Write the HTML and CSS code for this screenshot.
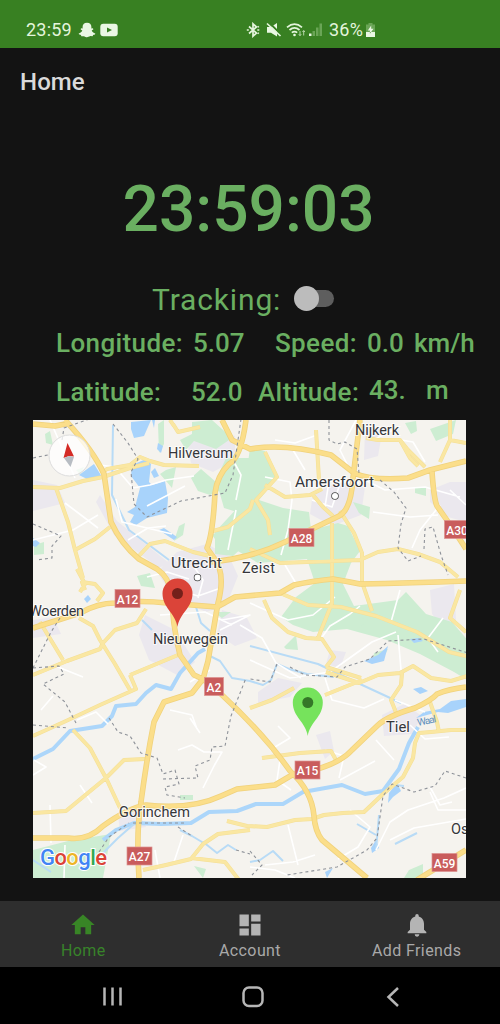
FILE: index.html
```html
<!DOCTYPE html>
<html lang="en">
<head>
<meta charset="utf-8">
<title>Home</title>
<link rel="stylesheet" href="styles.css">
</head>
<body>
<div class="phone">
  <header class="status">
    <div class="status-left">
      <span class="status-time">23:59</span>
      <svg class="snap" width="18" height="16" viewBox="0 0 18 16"><path d="M9 .8c3 0 4.600 2 4.400 4.400v1.200l1.600-.1.300 1.200-1.600 1c.5 1.500 1.800 2.300 3.600 2.900-.1 1.200-1.400 1.300-2.200 1.500l-.5 1.300-2.200-.1C10.800 14.700 10 15.300 9 15.300s-1.800-.6-2.900-1.100l-2.700.1-.5-1.300c-.8-.2-2.100-.3-2.200-1.500 1.800-.6 3.100-1.400 3.600-2.900L2.700 7.500 3 6.300l1.600.1V5.200C4.400 2.800 6 .8 9 .8Z"/></svg>
      <svg class="tube" width="18" height="14" viewBox="0 0 18 14"><rect x=".3" y=".7" width="17.400" height="12.600" rx="3"/><path class="tube-play" d="M7 4.500v5l5-2.500Z"/></svg>
    </div>
    <div class="status-right">
      <svg width="14" height="16" viewBox="0 0 14 16"><path class="line" d="M3 4.500 10.500 11 7 14.200V1.800L10.500 5 3 11.500M.8 8h2M11.300 8h2M11.800 5.200l1-.8M11.800 10.800l1 .8"/></svg>
      <svg class="mute" width="17" height="16" viewBox="0 0 17 16"><path d="M1 5h4l6-4v13.500L5 10.800H1Z"/><path class="slash" d="M3 .5 15.500 13"/><path class="line" d="M1 1.500 14.500 14"/></svg>
      <svg class="wifi" width="20" height="16" viewBox="0 0 20 16"><path class="line" d="M1 5.300q7.500-6.500 15 0M3.500 8q5-4.300 10 0M5.800 10.700q2.700-2.200 5.400 0"/><circle cx="8.500" cy="13" r="1.300"/><path class="thin" d="M14 9v4.500M12.800 12.200l1.200 1.500 1.200-1.500M17.700 13.500V8.700M16.500 10l1.200-1.500L18.900 10"/></svg>
      <svg class="signal" width="15" height="16" viewBox="0 0 15 16"><path d="M1 11.500h2.500V14H1Z"/><path class="faint" d="M4.500 9H7v5H4.500ZM8 5.500h2.500V14H8ZM11.500 1.500H14V14h-2.500Z"/></svg>
      <span class="battery-level">36%</span>
      <svg class="battery" width="11" height="16" viewBox="0 0 11 16"><path class="faint" d="M3.500 1h4v1.500H10V15H1V2.500h2.500Z"/><path d="M1 10h9v5H1ZM6.200 3.500 2.800 8.500h2.100v3.200l3.600-4.900H6.200Z"/></svg>
    </div>
  </header>

  <div class="app-bar">Home</div>

  <main class="content">
    <div class="clock">23:59:03</div>
    <div class="tracking"><span>Tracking:</span><span class="switch"><span class="knob"></span></span></div>
    <div class="stats">
      <span class="label">Longitude:</span><span class="value">5.07</span><span class="label">Speed:</span><span>0.0</span><span>km/h</span>
    </div>
    <div class="stats second">
      <span class="label">Latitude:</span><span class="value">52.0</span><span class="label">Altitude:</span><span class="raised">43.</span><span class="raised unit">m</span>
    </div>

    <svg class="map" viewBox="33 420 433 458" width="433" height="458">
      <rect class="land" x="33" y="420" width="433" height="458"/>
      <g class="urban">
        <path d="M157 572l20-20 30-8 22 12 9 20-12 30-20 6-32-14ZM145 615l30 15 20 32-16 14-30-16-10-25ZM222 610l25 8 10 20-22 8-18-12ZM313 493l25-10 27 4-4 28-29 11-22-12ZM430 490l20-8 16 0v40l-18-5-18-15ZM188 446l22-18 25 8v24l-22 12-22-9ZM33 480l24 5 8 18-32 8ZM258 692l20-14 24 5-12 14-32 6ZM382 715l22-11 18 12-10 18-28 2ZM430 590l24-6 2 36-12 8-12-14ZM33 620l20-3 8 17-28 4ZM365 430l18-2-5 28-14 4ZM118 815l20-4 8 16-26 4ZM330 650l16 2-6 16-14-4ZM100 495l17 26 52 42-10 5-45-33-18-33ZM316 735l14-4 4 20-9 8Z"/>
      </g>
      <g class="park">
        <path d="M250 448l15 3 12 27-18 22 24 8 26 4 2 18 27-7 10 3 12 25-9 12-8 21 11 22 22-3 22-3 8-8 20 22 26 8 24 28 6 16-3 21-25-15-34-18-33-14-40-11-34 3-20-7-12-8 15-20 19-14-8-24-49 4-27-16 10-28 4-34Z"/>
        <path d="M191 478l10-9 23 20-14 6-12-4ZM192 422l20-2 20 18-16 11-22-8-8 9-6-10 12-6ZM226 458h24v58l-26-8-8-28ZM240 505l20-5-3 34-24 22-18-2v-22ZM166 470l10-3-4 21-12-14ZM158 424l6-4v24l-5 9ZM212 535l20-13-4 16-10 5ZM137 576l13-3 5 15-14-2ZM213 612h18l-9 6ZM405 423l11-2 1 10-6 3ZM430 429l26-9-3 14-17 7ZM353 502l17 5-1 12-10-6ZM415 488h11v8l-11-3ZM45 434l5-3 3 14-7-2ZM34 545l10-3v12l-10 1ZM284 647l12-12 2 15-12-1ZM304 605l28 4-16 10-14-1ZM360 617l8 3-11 10ZM374 653l14-4-6 11-9-1ZM33 850l35-9 43-7-8 44H33ZM180 795h13v5h-13ZM194 866l12 3-3 9ZM409 870l14-6v14h-19ZM174 541l5-15 6-3-2 12ZM80 474l-4-4 8-3Z"/>
      </g>
      <g class="water">
        <path d="M131 422l20-2-7 16-10 2-3-9ZM132 465l14-6 5 5-2 18 3 3 13-4 3 17-1 15-20 5-11 7-6-3 4-7-7-3 8-5 5-19-9-12ZM151 472l4-4 4 8-5 2ZM152 420l3 0-1 8ZM158 443l5 3-2 7-4-4ZM79 475l15-11 8 13-13 3ZM159 530l5-2 13 9-3 3ZM33 538l7 5-4 4-3-1ZM84 599l4-4 3 4-4 4ZM364 661l14-6 10-9-4 15-12 3ZM410 639l9-1 4 3-9 2ZM413 689l8-2 7 4-8 3ZM440 709l11-8 15-2v8l-18 6-10-1-22 6 8-6ZM389 793l8-10 4 8-8 6-5 6ZM376 840l3 8-7 5-1-5ZM325 872l8-4-6 10Z"/>
      </g>
      <g class="river">
        <path d="M33 759l20-10 17-18 32-5 10-10 4-10 20-2 10-11 10-8 15 4 9-16 18-20 7-4M103 840l13-10 18-7 27 1 30-1 18-11 28-1 19-7 27 0 20-12 39-7 23 9 18-3 16-22 10-26 9-16"/>
      </g>
      <g class="stream">
        <path d="M210 656l10 5 12 17 18 3M113 425l-1 70 17 35 40 30M196 607l5 16 9 8M142 620l10 10M250 646l68 18 42 20 41 19M250 681l13 4 8-5 6-16 12 5 18 5 27 3M33 860l18 12M99 857l19-19 16-14M180 830l12 6 15 9 10 8 11-8 8 5M250 862l10-2 13-9 10 10M357 824l19 11M395 844l22-11M376 850l3-35M395 785l9 1"/>
      </g>
      <g class="minor">
        <path d="M50 420l25 58M65 503l12 9 21 16M100 465l15 2 18 21 17-3 16-5 28-4M116 499l6 23 50 12M147 506l38-20M236 500l5-25-8-15M236 510l-8 40M265 477l25 5 2 18-4 30-7 25M340 484l-8 23-20-7M325 507l4-26 30 2M350 470l-10-20 16-30M373 440l20-10M365 480l20 10 40-3 35 10M373 512l37 5 28-2M440 505l-20 25-8 18M450 490l16 15M425 462l-12-20-18-3M275 440l20 3 22-8M33 540l40-10 25-15M128 540l20-12 18-2M193 565l10 15-5 18M147 577l20-5 22 7M160 615l45-3 27 13M178 590l20 6 20-7M222 620l28-5-30 15M240 625l22 13 14 25 25 15M250 603l38 17 25-5 22-18M250 660l40 18 40-6 42-30 24-10M320 640l10-14 20-12 10-8M400 590l-9 32M443 618l-15 20 10 14M398 635l3 35M325 678l7 22 32 8 20-9M395 700l30 12M410 725l15 14 24-2M34 760l12 7-13 8M80 785l12 18M50 805l1 38M77 720l19-8 12 12M178 750l14-5 12 7 18 0-8 14M215 764l-12 24M270 750l20-12-12-12M280 760l-3 20 14 10M325 750l19 6-5 22M340 780l35-19M376 740l18 20M350 810l20 17-12 20-20 12M376 850l14-28 18-12 36-12 22-10M390 840l24-12 52-9M430 792l8 18 28 0M430 787l10 18 12-3M288 825l10 40M265 865l28-3 22-7M250 867l25 3 20 8M183 835l-10 30M155 850l5 28M65 845l-1 33M190 718l10 15M53 665l30 12M53 696l-12 14M210 670l-20 12M170 710l22 5 5 14M285 565l12 20M305 470l-12-20"/>
      </g>
      <g class="road casing">
        <path id="sec" d="M33 487l27 1 23-7 20-4 27-9 19-5M56 488l12 34 7 28 8 28M75 550l20-11 15-12M102 473l5-4 23-4 10-8 10 4 14 4 35 1M137 558l13-14 15-3 28 11 17 4M173 424l5 8 22-5M213 531l15-4 22-18 3-9M170 420l4 6M77 569l8 15-5 8M85 590l-3-8 13 2 8 9-6 8M79 618l14 8 7 14 15 24 15 26M40 622l23 38M33 675l34-14 33-12 3-6 12-13 22-7 9-14M130 675l48-20M130 675l6 14-36 16-34 16-22 10-11 5M73 730l17 18 17 32 13 28M33 813l33-2 40-33 18-18 21-1M264 600l8 18 16 14 18 6 16 1 12 18-8 10M326 667l35 11M280 593l28 12 33 2 35 9 41 16 32 20 17 4M265 452l12 25-21 23 12 20 2 15M265 485l20 12 25-2 12-6M316 430l3 50M313 495l10 12 10 9M332 523v80l-14 35M340 511l14 22 8 20v30M363 585l9 26M250 549l30 14 80-3 18-8 20-3 20 5 22 8 18 15M366 438l12 2 22 0 8 10 17 17M400 440l10 18 8 8M450 420l0 20 16 3M450 440l-10 22M460 590l-10 28 16 14M326 672l33 11 19-8 22-2 13-7 18 12 20 3 16-5M325 695l37-15M402 673l-1 12-10 15 6 15M250 708l22-8 22-12M430 702l7 20 2 10M466 730h-15l-20 2-12 1-4 10-2 15-10 19-20 17-19 18-21 1-19 2-12 4-17 1-28 7-20-1-20-5M262 758l38-5 31-2 5 9M143 870l23-5 25-6 12-15 15-10 32-4M191 858l34 4 14 18"/>
      </g>
      <g class="road fill"><use href="#sec"/></g>
      <g class="main casing">
        <path id="pri" d="M65 420q28 30 39 54l7 48q10 22 28 37l18 10q12 8 15 26 0 28 8 60l14 20 9 4 18 15q43 40 69 77 22 20 24 45 1 15 8 24l45 38M246 420q-5 38-17 44-12 12-14 29-2 40-8 55l7 10q12 15 4 45l-10 58-5 18-11 14-28 9-10 20q-7 35-13 80-5 30-2 76M33 628l47-15q18-10 35-10 25-3 52 0l50 4 18-10 45-4 14-8q18-4 39-6 12 2 27 5 50-1 106-3M210 562q42-4 75-20l54-26q12-6 14-38l7-58M222 420l10 20 18 9q34-6 81 6l23 18q18 8 54 5l22-8 36-9M432 472q2 28 5 34l14 20 15 23M33 838h35q20 3 35-12 25-18 43-21 45 5 75-9l16-7 38-4 17-10q45-8 60-25l25-24q10-10 38-18 17-8 22-14 12-5 29-7M417 880l49-30M33 424l22 2 15-3"/>
      </g>
      <g class="main fill"><use href="#pri"/></g>
      <path class="border" d="M113 424l15 19 10 16-7 13 3 32 13 13 34-16 44-8 8-18 8-56M33 458l15-3M62 440l2-12 28-10M33 524l28 12-9 10v12l-16 2M60 618l-9 14-18 36M33 668l26-2 5 8-21 10 22 18 12 23M33 725l35 3M109 718l9 14 12 4 11 17 16 5 6 16 12-4 4 14-14 3 2 8 18 3M163 779l35-1-3-12 15-6 2-13 13-1 6-30 15-38M329 420l0 20 8 4 8-2 12 7 2 24M380 480l14 12 12 16-5 16-3 24 10 13 13-5M424 549l1-20 8-2 8 28 7 20M277 664l-7 18-20-3M290 667l15 8 32 2 8-10 25-8 18-18 36-2 44 14M133 823h52M99 852l10-15 20-14M178 827l14 9M236 850l14 4M466 778l-21-7-10 15-21 6-22-8-9 12-6 42-10 12-30 17-50 8M250 851l12 14-10 10"/>
      <g class="river-name"><text x="418" y="726" textLength="19" transform="rotate(-12 418 726)">Waal</text></g>
      <g class="places">
        <text x="168" y="458" textLength="65">Hilversum</text><text x="355" y="435" textLength="44">Nijkerk</text><text x="295" y="486.500" textLength="79" lengthAdjust="spacingAndGlyphs">Amersfoort</text><text x="171" y="567.500" textLength="51" lengthAdjust="spacingAndGlyphs">Utrecht</text><text x="242" y="573" textLength="33">Zeist</text><text x="29" y="616" textLength="55">Woerden</text><text x="153" y="643.500" textLength="75">Nieuwegein</text><text x="386" y="732" textLength="24" lengthAdjust="spacingAndGlyphs">Tiel</text><text x="119" y="817" textLength="71">Gorinchem</text><text x="451" y="834">Os</text>
        <circle cx="335" cy="496" r="3"/><circle cx="197.500" cy="577.500" r="3"/>
      </g>
      <g class="shields">
        <rect x="289" y="528.500" width="25" height="18"/><rect x="444.500" y="520.500" width="25" height="18"/><rect x="115" y="589.500" width="25" height="18"/><rect x="204.500" y="677.500" width="19" height="18"/><rect x="295" y="761" width="25" height="18"/><rect x="127" y="847" width="25" height="18"/><rect x="432" y="853.500" width="25" height="18"/>
        <text x="301.500" y="542.500">A28</text><text x="457" y="534.500">A30</text><text x="127.500" y="603.500">A12</text><text x="214" y="691.500">A2</text><text x="307.500" y="775">A15</text><text x="139.500" y="861">A27</text><text x="444.500" y="867.500">A59</text>
      </g>
      <g><path fill="#db4439" d="M177.500 627C175.500 613 162.500 608 162.500 593.500a15 15 0 0 1 30 0C192.500 608 179.500 613 177.500 627Z"/><circle cx="177.500" cy="593.500" r="5.500" fill="#74201a"/></g>
      <g><path fill="#76e35c" d="M307.800 736C305.800 722 292.800 717 292.800 702.500a15 15 0 0 1 30 0C322.800 717 309.800 722 307.800 736Z"/><circle cx="307.800" cy="702.500" r="5.500" fill="#357728"/></g>
      <circle class="compass" cx="69.500" cy="455.500" r="20.500"/>
      <path fill="#d42b25" d="M67.500 443l-4 15 5.500-2 5 .5Z"/><path fill="#b8bdc3" d="M64 458l5-2 5 1-3.500 10Z"/>
      <text class="google" x="40" y="864.500" textLength="67"><tspan fill="#4285f4">G</tspan><tspan fill="#db4437">o</tspan><tspan fill="#edb526">o</tspan><tspan fill="#4285f4">g</tspan><tspan fill="#34a853">l</tspan><tspan fill="#db4437">e</tspan></text>
    </svg>
  </main>

  <nav class="tabs">
    <div class="tab active"><svg width="28" height="28" viewBox="0 0 24 24"><path d="M10 20v-6h4v6h5v-8h3L12 3 2 12h3v8Z"/></svg><span>Home</span></div>
    <div class="tab"><svg width="28" height="28" viewBox="0 0 24 24"><path d="M3 13h8V3H3Zm0 8h8v-6H3Zm10 0h8V11h-8Zm0-18v6h8V3Z"/></svg><span>Account</span></div>
    <div class="tab"><svg width="28" height="28" viewBox="0 0 24 24"><path d="M12 22c1.100 0 2-.9 2-2h-4a2 2 0 0 0 2 2Zm6-6v-5c0-3.070-1.640-5.640-4.500-6.320V4a1.500 1.500 0 0 0-3 0v.68C7.630 5.360 6 7.920 6 11v5l-2 2v1h16v-1Z"/></svg><span>Add Friends</span></div>
  </nav>

  <footer class="system">
    <svg width="22" height="22" viewBox="0 0 22 22"><path d="M2.500 1.500v18M10.500 1.500v18M18.500 1.500v18"/></svg>
    <svg width="22" height="22" viewBox="0 0 22 22"><rect x="1.500" y="1.500" width="19" height="18.500" rx="5.500"/></svg>
    <svg width="22" height="22" viewBox="0 0 22 22"><path d="M16 2 6.500 11 16 20"/></svg>
  </footer>
</div>
</body>
</html>
```
FILE: styles.css
```css
* { box-sizing: border-box; }
body { margin: 0; background: #131313; font-family: Roboto, "Liberation Sans", sans-serif; }
svg { display: block; flex: none; }
.phone { width: 500px; height: 1024px; display: flex; flex-direction: column; background: #131313; overflow: hidden; }

.status { height: 48px; flex: none; padding: 12px 124px 0 26px; background: #388022; color: #e4f5dc; display: flex; justify-content: space-between; font-size: 18px; line-height: 36px; }
.status-left, .status-right { display: flex; align-items: center; height: 36px; }
.status-time { letter-spacing: .2px; }
.status svg { fill: #eaf7e4; }
.snap { margin-left: 6px; }
.tube { margin-left: 4px; }
.status .tube-play { fill: #388022; }
.status .line { fill: none; stroke: #e4f5dc; stroke-width: 1.7; }
.slash { stroke: #388022; stroke-width: 2; }
.status .thin { fill: none; stroke: #b6d6a9; stroke-width: 1; }
.status .faint { fill: #6aa556; }
.mute { margin-left: 6px; }
.wifi { margin-left: 3px; }
.signal { margin-left: 2px; }
.battery-level { margin-left: 6px; width: 36px; white-space: nowrap; letter-spacing: .2px; }
.battery { margin-left: 0; }

.app-bar { height: 68px; flex: none; padding-left: 20px; color: #dadada; font-size: 24px; font-weight: 500; line-height: 68px; letter-spacing: .1px; }

.content { flex: 1; min-height: 0; color: #6aaf61; }
.clock { height: 92px; margin-top: 48px; font-size: 64px; font-weight: 500; line-height: 92px; text-align: center; padding-right: 3px; }
.tracking { display: flex; align-items: center; height: 36px; margin-top: 26px; padding-left: 152px; font-size: 30px; line-height: 36px; }
.tracking > span:first-child { width: 142px; letter-spacing: .85px; }
.switch { display: flex; align-items: center; width: 38px; height: 17px; margin: -3px 0 0 2px; border-radius: 9px; background: #5e5e5e; }
.knob { width: 25px; height: 25px; margin-left: -2px; flex: none; border-radius: 50%; background: #bcbcbc; }
.stats { display: grid; grid-template-columns: 137px 82px 92px 47px 70px; padding-left: 56px; height: 36px; margin-top: 7px; font-size: 26px; font-weight: 500; line-height: 36px; white-space: nowrap; }
.stats.second { grid-template-columns: 135px 67px 111px 57px 50px; margin-top: 13px; }
.label { letter-spacing: .38px; }
.raised { line-height: 32px; }
.map { margin: 10px 0 0 33px; }

.land { fill: #f5f3ee; }
.urban { fill: #ebe8ee; }
.park { fill: #cdedd2; }
.water { fill: #a8d3fb; }
.river, .stream, .minor, .road, .main, .border { fill: none; stroke-linejoin: round; }
.river { stroke: #acd6fa; stroke-width: 4; }
.stream { stroke: #b8dbf6; stroke-width: 2; }
.minor { stroke: #fff; stroke-width: 1.6; }
.road.casing { stroke: #f4df97; stroke-width: 4; }
.road.fill { stroke: #fae7a2; stroke-width: 3; }
.main.casing { stroke: #f0d27c; stroke-width: 5.6; }
.main.fill { stroke: #fbde8a; stroke-width: 4; }
.border { stroke: #8e9299; stroke-width: 1.1; stroke-dasharray: 3 3; }
.river-name { font-size: 10px; fill: #5f91bd; }
.places { font-size: 14.5px; fill: #35363a; stroke: #fff; stroke-width: 2px; stroke-opacity: .7; paint-order: stroke; }
.places circle { fill: #fff; stroke: #444; stroke-width: 1.5px; stroke-opacity: 1; }
.shields rect { fill: #c95c5c; stroke: #dc9290; stroke-width: .7; }
.shields text { font-size: 12px; font-weight: 500; fill: #fff; text-anchor: middle; }
.compass { fill: #fff; fill-opacity: .75; stroke: #ddd; stroke-width: 1; }
.google { font-size: 22px; font-weight: 500; stroke: #fff; stroke-width: 2px; paint-order: stroke; }

.tabs { height: 66px; flex: none; display: grid; grid-template-columns: repeat(3, 1fr); background: #2e2e2e; color: #a9a9a9; }
.tab { display: flex; flex-direction: column; align-items: center; padding-top: 10px; font-size: 16px; line-height: 20px; letter-spacing: .4px; }
.tab svg { fill: #b4b4b4; }
.tab span { margin-top: 2px; }
.tab.active { color: #38832a; }
.tab.active svg { fill: #388526; }
.system { height: 57px; flex: none; display: flex; gap: 118px; padding: 19px 0 0 102px; background: #000; }
.system svg { fill: none; stroke: #b6b6b6; stroke-width: 2.5; }
```
